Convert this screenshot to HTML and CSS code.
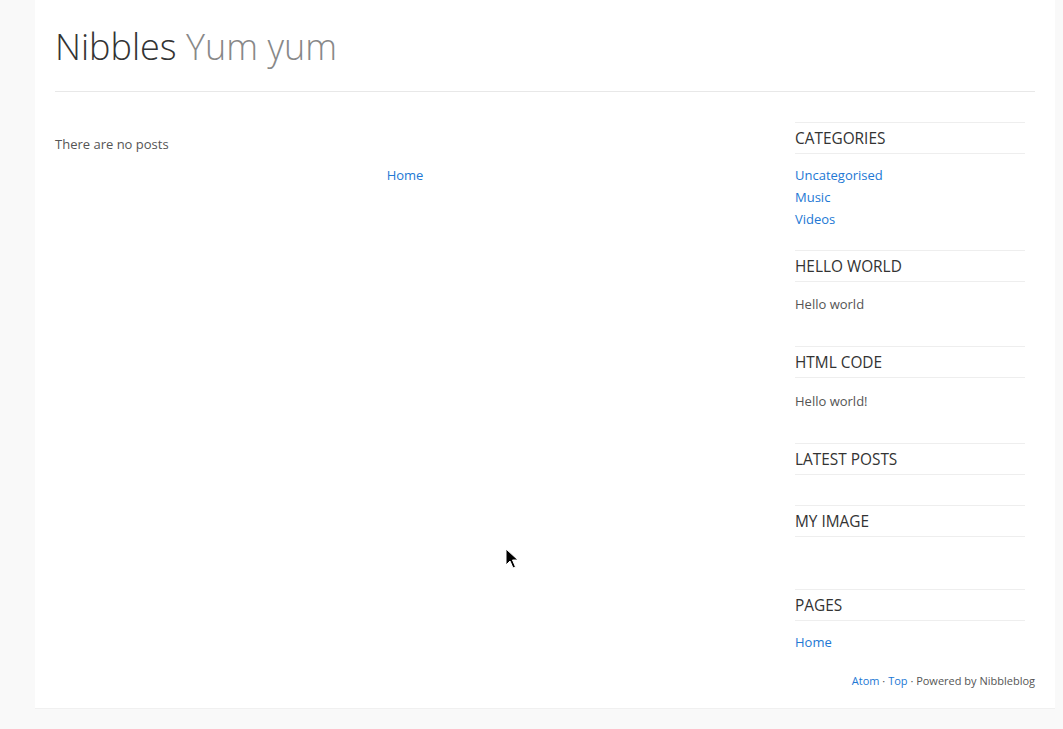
FILE: index.html
```html
<!DOCTYPE html>
<html>
<head>
<meta charset="utf-8">
<title>Nibbles - Yum yum</title>
<link rel="stylesheet" href="styles.css">
</head>
<body>
<div class="container">
  <header class="site-header">
    <h1 class="site-title">Nibbles <span class="slogan">Yum yum</span></h1>
  </header>
  <div class="layout">
    <main class="main">
      <p class="no-posts">There are no posts</p>
      <nav class="pager"><a href="#">Home</a></nav>
    </main>
    <aside class="sidebar">
      <section class="widget">
        <h3 class="widget-title">Categories</h3>
        <ul class="widget-body links">
          <li><a href="#">Uncategorised</a></li>
          <li><a href="#">Music</a></li>
          <li><a href="#">Videos</a></li>
        </ul>
      </section>
      <section class="widget">
        <h3 class="widget-title">Hello world</h3>
        <div class="widget-body"><p class="text">Hello world</p></div>
      </section>
      <section class="widget">
        <h3 class="widget-title">HTML Code</h3>
        <div class="widget-body"><p class="text text-html">Hello world!</p></div>
      </section>
      <section class="widget">
        <h3 class="widget-title">Latest posts</h3>
        <div class="widget-body"></div>
      </section>
      <section class="widget">
        <h3 class="widget-title">My image</h3>
        <div class="widget-body"><div class="image-slot"></div></div>
      </section>
      <section class="widget">
        <h3 class="widget-title">Pages</h3>
        <ul class="widget-body links">
          <li><a href="#">Home</a></li>
        </ul>
      </section>
    </aside>
  </div>
  <footer class="site-footer">
    <a href="#">Atom</a> · <a href="#">Top</a> · Powered by Nibbleblog
  </footer>
</div>
<svg class="cursor" width="14" height="22" viewBox="0 0 14 22">
  <path d="M1 1 L1 17 L5 13 L8 20 L10.5 19 L7.5 12 L13 12 Z" fill="#000" stroke="#fff" stroke-width="1"/>
</svg>
</body>
</html>
```
FILE: styles.css
```css
html, body {
  margin: 0;
  padding: 0;
  background: #f9f9f9;
  font-family: "Open Sans", "Liberation Sans", sans-serif;
  color: #555;
  font-size: 13px;
}
a {
  color: #2278d4;
  text-decoration: none;
}
.container {
  width: 980px;
  margin-left: 35px;
  padding: 0 20px 19px;
  background: #fff;
  border-bottom: 1px solid #f0f0f0;
}
.site-header {
  padding-top: 21px;
  border-bottom: 1px solid #e8e8e8;
}
.site-title {
  margin: 0 0 18px;
  font-size: 36px;
  line-height: 52px;
  font-weight: 300;
  color: #333;
}
.slogan {
  color: #888;
}
.layout {
  display: flex;
  padding-top: 30px;
}
.main {
  width: 700px;
  margin-right: 40px;
  padding-top: 11px;
}
.no-posts {
  margin: 0;
  line-height: 22px;
}
.pager {
  margin-top: 9px;
  text-align: center;
  line-height: 22px;
}
.sidebar {
  width: 230px;
}
.widget {
  display: flow-root;
  margin-bottom: 20px;
}
.widget-title {
  margin: 0;
  padding-top: 2px;
  border-top: 1px solid #eeeeee;
  border-bottom: 1px solid #eeeeee;
  font-size: 15.4px;
  line-height: 28px;
  font-weight: 400;
  color: #333;
  text-transform: uppercase;
}
.widget-body {
  padding-top: 10px;
}
.links {
  list-style: none;
  margin: 0;
  padding-left: 0;
}
.links li {
  line-height: 22px;
}
.text {
  margin: 0;
  padding-top: 1px;
  padding-bottom: 11px;
  line-height: 22px;
}
.text-html {
  padding-top: 2px;
}
.image-slot {
  height: 22px;
}
.site-footer {
  text-align: right;
  font-size: 11px;
  line-height: 16px;
}
.cursor {
  position: absolute;
  left: 505px;
  top: 548px;
}
```
